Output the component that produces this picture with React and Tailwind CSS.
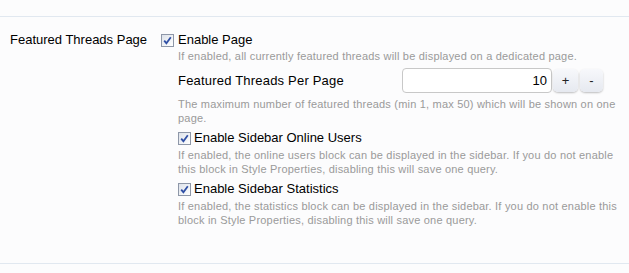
import React from "react";

const Check = () => (
  <span className="inline-flex h-[13px] w-[13px] shrink-0 items-center justify-center border border-[#8e97a8] bg-gradient-to-br from-[#dde2ea] to-[#ffffff]">
    <svg width="9" height="9" viewBox="0 0 9 9">
      <path d="M1.2 4.6 L3.4 7.2 L7.8 1.2" fill="none" stroke="#2f4fa5" strokeWidth="1.8" />
    </svg>
  </span>
);

const Hint = ({ children, className = "" }) => (
  <p className={`whitespace-nowrap text-[11px] leading-[14px] tracking-[0.2px] text-[#9a9a9a] ${className}`}>
    {children}
  </p>
);

const SpinButton = ({ label, className = "" }) => (
  <button
    className={`h-[23px] rounded-[5px] bg-gradient-to-b from-[#f7f8fb] to-[#e6e9f0] text-[13px] text-[#222] shadow-[0_1px_2px_rgba(0,0,0,0.25)] ${className}`}
  >
    {label}
  </button>
);

export default function App() {
  return (
    <div
      className="h-[273px] w-[629px] bg-[#fcfcfd] pt-4 text-black"
      style={{ fontFamily: '"Liberation Sans", Arial, sans-serif' }}
    >
      <div className="flex h-[248px] border-y border-[#e1e8f0] pt-[15px]">
        <div className="w-[161px] pl-[10px] text-[13px] leading-4">Featured Threads Page</div>

        <div className="w-[460px]">
          <label className="flex items-center gap-1 text-[13px] leading-4">
            <Check />
            Enable Page
          </label>
          <div className="pl-[17px]">
            <Hint className="mt-px">
              If enabled, all currently featured threads will be displayed on a dedicated page.
            </Hint>

            <div className="mt-[5px] flex items-center">
              <span className="w-[224px] text-[13px] leading-4 tracking-[0.2px]">Featured Threads Per Page</span>
              <div className="flex h-[25px] w-[150px] items-center justify-end rounded-[4px] border border-[#c8c8c8] bg-white pr-[4px] text-[13px]">
                10
              </div>
              <SpinButton label="+" className="ml-px w-[25px]" />
              <SpinButton label="-" className="ml-[2px] w-[23px]" />
            </div>

            <Hint className="mt-[4px]">
              The maximum number of featured threads (min 1, max 50) which will be shown on one
              <br />
              page.
            </Hint>

            <label className="mt-[5px] flex items-center gap-[3px] text-[13px] leading-4">
              <Check />
              Enable Sidebar Online Users
            </label>
            <Hint className="mt-[2px]">
              If enabled, the online users block can be displayed in the sidebar. If you do not enable
              <br />
              this block in Style Properties, disabling this will save one query.
            </Hint>

            <label className="mt-[5px] flex items-center gap-[3px] text-[13px] leading-4">
              <Check />
              Enable Sidebar Statistics
            </label>
            <Hint className="mt-[2px]">
              If enabled, the statistics block can be displayed in the sidebar. If you do not enable this
              <br />
              block in Style Properties, disabling this will save one query.
            </Hint>
          </div>
        </div>
      </div>
    </div>
  );
}
